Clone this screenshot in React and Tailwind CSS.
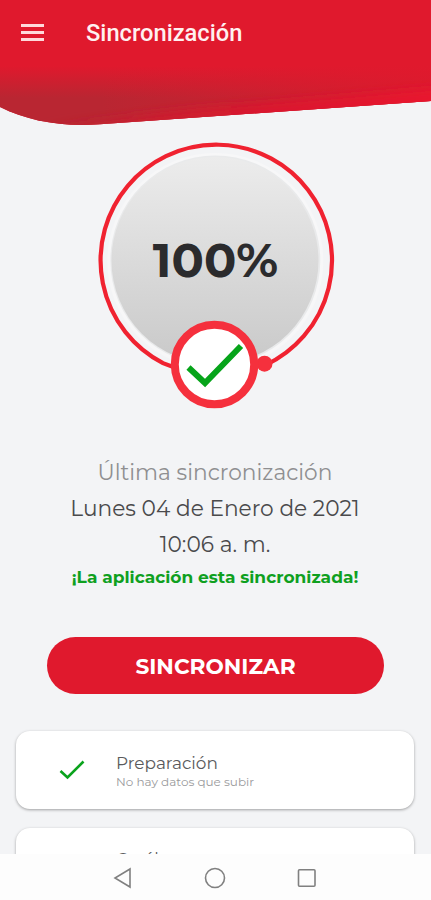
const FONT = "font-['Montserrat','Inter','Liberation_Sans',sans-serif]";

function Header() {
  return (
    <header className="relative h-[126px] shrink-0">
      <svg className="absolute inset-0" width="431" height="126" viewBox="0 0 431 126" aria-hidden="true">
        <defs>
          <linearGradient id="shade" gradientUnits="userSpaceOnUse" x1="0" y1="66" x2="0" y2="98">
            <stop offset="0" stopColor="#b92632" stopOpacity="0" />
            <stop offset="1" stopColor="#b92632" />
          </linearGradient>
          <linearGradient id="edge" gradientUnits="userSpaceOnUse" x1="100" y1="0" x2="431" y2="0">
            <stop offset="0" stopColor="#e0192d" stopOpacity="0" />
            <stop offset="1" stopColor="#e0192d" stopOpacity="0.85" />
          </linearGradient>
          <linearGradient id="rim" gradientUnits="userSpaceOnUse" x1="40" y1="0" x2="431" y2="0">
            <stop offset="0" stopColor="#c02231" stopOpacity="0" />
            <stop offset="0.3" stopColor="#cb1c2f" />
            <stop offset="0.6" stopColor="#db182d" />
            <stop offset="1" stopColor="#e8152f" />
          </linearGradient>
          <filter id="soft" filterUnits="userSpaceOnUse" x="0" y="60" width="480" height="100">
            <feGaussianBlur stdDeviation="4" />
          </filter>
          <clipPath id="wave">
            <path d="M0 0H431V101L100 124.3C61 127 28 121 0 107Z" />
          </clipPath>
        </defs>
        <g clipPath="url(#wave)">
          <rect width="431" height="126" fill="#e0192d" />
          <rect y="66" width="431" height="60" fill="url(#shade)" />
          <rect y="66" width="431" height="60" fill="url(#edge)" />
          <path d="M40 126L200 108L470 85V150H40Z" fill="url(#rim)" filter="url(#soft)" />
        </g>
      </svg>
      <div className="relative flex h-16 items-center pl-[21px]">
        <div className="flex w-[23px] flex-col gap-[4px]">
          <span className="h-[3px] bg-[#ffd9db]" />
          <span className="h-[3px] bg-[#ffd9db]" />
          <span className="h-[3px] bg-[#ffd9db]" />
        </div>
        <h1 className="ml-[42px] mt-[3px] whitespace-nowrap font-[Roboto,sans-serif] text-[23.7px] font-medium leading-none text-[#fff0f0]">Sincronización</h1>
      </div>
    </header>
  );
}

function Gauge() {
  return (
    <div className="relative mx-auto mt-[14px] h-[270px] w-[241px] shrink-0">
      <svg width="241" height="270" viewBox="95 140 241 270" aria-hidden="true">
        <defs>
          <linearGradient id="disc" x1="0" y1="0" x2="0" y2="1">
            <stop offset="0" stopColor="#ececec" />
            <stop offset="1" stopColor="#c9c9c9" />
          </linearGradient>
        </defs>
        <circle cx="215.3" cy="261" r="108" fill="#f7f7f8" />
        <circle cx="215.3" cy="260.5" r="105" fill="#e9eaeb" />
        <circle cx="215" cy="260.5" r="103.5" fill="url(#disc)" />
        <path d="M176 368L163 363.1A115.7 115.7 0 1 1 265.1 365.3" fill="none" stroke="#f02230" strokeWidth="4.2" />
        <circle cx="264.5" cy="363.7" r="8" fill="#f5303d" />
        <circle cx="214.5" cy="364.5" r="39.7" fill="#fff" stroke="#f5303d" strokeWidth="8" />
        <path d="M188.5 367.5L205 383L241 346" fill="none" stroke="#06a41a" strokeWidth="6" />
      </svg>
      <div className={`absolute inset-x-0 top-[92px] flex justify-center text-[47.7px] font-bold leading-[56px] text-[#2b2b2d] ${FONT}`}>
        <span>100%</span>
      </div>
    </div>
  );
}

function Card({ title, note, done }) {
  return (
    <div className="flex h-[78px] items-center rounded-[14px] bg-white shadow-[0_1px_3px_rgba(0,0,0,0.35)]">
      <div className="flex w-[100px] justify-center pl-[11px]">
        {done && (
          <svg width="26" height="20" viewBox="0 0 26 20" aria-hidden="true">
            <path d="M1.5 11L8.5 17.5L24.5 1.5" fill="none" stroke="#0ba31d" strokeWidth="2.6" />
          </svg>
        )}
      </div>
      <div className={`flex flex-col whitespace-nowrap ${done ? "pt-1" : "pt-px"}`}>
        <span className="text-[16.9px] leading-5 text-[#5a5a5c]">{title}</span>
        <span className="h-[18px] text-[12px] leading-[18px] text-[#9a9a9c]">{note}</span>
      </div>
    </div>
  );
}

export default function App() {
  return (
    <div className={`flex h-[900px] w-[431px] flex-col overflow-hidden bg-[#f3f4f6] ${FONT}`}>
      <div className="flex h-[854px] shrink-0 flex-col overflow-hidden">
        <Header />
        <Gauge />
        <div className="mr-px mt-[44px] flex shrink-0 flex-col items-center whitespace-nowrap">
          <p className="text-[21.7px] leading-9 text-[#8f8f91]">Última sincronización</p>
          <p className="text-[21.7px] leading-9 text-[#4a4a4c]">Lunes 04 de Enero de 2021</p>
          <p className="text-[21.7px] leading-9 text-[#4a4a4c]">10:06 a. m.</p>
          <p className="text-[17px] font-bold leading-[30px] text-[#0fa01f]">¡La aplicación esta sincronizada!</p>
        </div>
        <button className="ml-[47px] mt-[45px] flex h-[57px] w-[337px] shrink-0 items-center justify-center rounded-full bg-[#e0192d] pt-[2px] text-[21.7px] font-bold text-white">
          <span>SINCRONIZAR</span>
        </button>
        <div className="ml-4 mr-[17px] mt-[37px] flex flex-col gap-[19px]">
          <Card title="Preparación" note="No hay datos que subir" done />
          <Card title="Catálogos" />
        </div>
      </div>
      <nav className="flex h-[46px] items-center justify-center gap-[71px] bg-[#fdfdfd] pr-px pt-px">
        <svg width="20" height="22" viewBox="0 0 20 22" fill="none" stroke="#808080" strokeWidth="1.6"><path d="M17 2V20L2 11Z" /></svg>
        <svg width="22" height="22" viewBox="0 0 22 22" fill="none" stroke="#808080" strokeWidth="1.6"><circle cx="11" cy="11" r="9.5" /></svg>
        <svg width="20" height="20" viewBox="0 0 20 20" fill="none" stroke="#808080" strokeWidth="1.6"><rect x="1.5" y="1.8" width="16.5" height="16.5" rx="1" /></svg>
      </nav>
    </div>
  );
}
